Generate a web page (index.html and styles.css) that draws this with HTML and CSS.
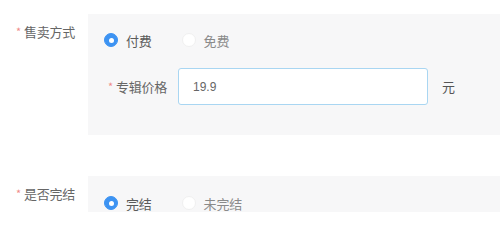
FILE: index.html
```html
<!DOCTYPE html>
<html lang="zh">
<head>
<meta charset="utf-8">
<link rel="stylesheet" href="styles.css">
</head>
<body>
<div class="form">
  <div class="item item-first">
    <div class="label"><span class="req">*</span>售卖方式</div>
    <div class="panel panel-sale">
      <div class="radios">
        <label class="radio checked"><span class="dot"></span><span class="rtext">付费</span></label>
        <label class="radio"><span class="dot"></span><span class="rtext">免费</span></label>
      </div>
      <div class="subrow">
        <div class="sublabel"><span class="req">*</span>专辑价格</div>
        <div class="input">19.9</div>
        <div class="unit">元</div>
      </div>
    </div>
  </div>
  <div class="item item-second">
    <div class="label"><span class="req">*</span>是否完结</div>
    <div class="panel">
      <div class="radios">
        <label class="radio checked"><span class="dot"></span><span class="rtext">完结</span></label>
        <label class="radio"><span class="dot"></span><span class="rtext">未完结</span></label>
      </div>
    </div>
  </div>
</div>
</body>
</html>
```

FILE: styles.css
```css
html, body {
  margin: 0;
  padding: 0;
  background: #ffffff;
  width: 500px;
  height: 212px;
  overflow: hidden;
}
body {
  font-family: "Noto Sans CJK SC", "Noto Sans", sans-serif;
  font-size: 13px;
  color: #666666;
}
.form {
  display: flex;
  flex-direction: column;
}
.item {
  display: flex;
  align-items: flex-start;
}
.item-first {
  margin-top: 14px;
}
.item-second {
  margin-top: 41px;
}
.label {
  width: 72px;
  padding-left: 16px;
  padding-top: 7px;
  line-height: 20px;
  color: #666666;
  flex-shrink: 0;
  letter-spacing: -0.2px;
}
.item-second .label {
  padding-top: 7px;
}
.req {
  color: #f08a8a;
  font-size: 11px;
  margin-right: 3px;
  vertical-align: 1px;
}
.panel {
  flex: 1;
  background: #f7f7f8;
  padding: 17px 0 0 16px;
  min-height: 40px;
}
.panel-sale {
  height: 105px;
  padding-top: 16px;
}
.radios {
  display: flex;
  align-items: center;
  height: 20px;
}
.radio {
  display: flex;
  align-items: center;
  margin-right: 30px;
}
.dot {
  width: 14px;
  height: 14px;
  border-radius: 50%;
  background: #ffffff;
  border: 1px solid #f0f0f0;
  box-sizing: border-box;
  position: relative;
  flex-shrink: 0;
}
.radio.checked .dot {
  background: #3d93f2;
  border-color: #3d93f2;
}
.radio.checked .dot::after {
  content: "";
  position: absolute;
  left: 50%;
  top: 50%;
  width: 5px;
  height: 5px;
  margin: -2.5px 0 0 -2.5px;
  border-radius: 50%;
  background: #ffffff;
}
.rtext {
  margin-left: 8px;
  color: #8a8a8a;
  letter-spacing: -0.2px;
}
.radio.checked .rtext {
  color: #5a5a5a;
}
.subrow {
  display: flex;
  align-items: center;
  margin-top: 18px;
  margin-left: 4px;
}
.sublabel {
  width: 70px;
  color: #666666;
  letter-spacing: -0.2px;
}
.input {
  width: 250px;
  height: 37px;
  box-sizing: border-box;
  border: 1px solid #a9d6f2;
  border-radius: 3px;
  background: #ffffff;
  padding-left: 14px;
  display: flex;
  align-items: center;
  color: #666666;
  font-family: "Liberation Sans", "Noto Sans CJK SC", sans-serif;
  font-size: 12px;
}
.unit {
  margin-left: 14px;
  color: #555555;
}
```
